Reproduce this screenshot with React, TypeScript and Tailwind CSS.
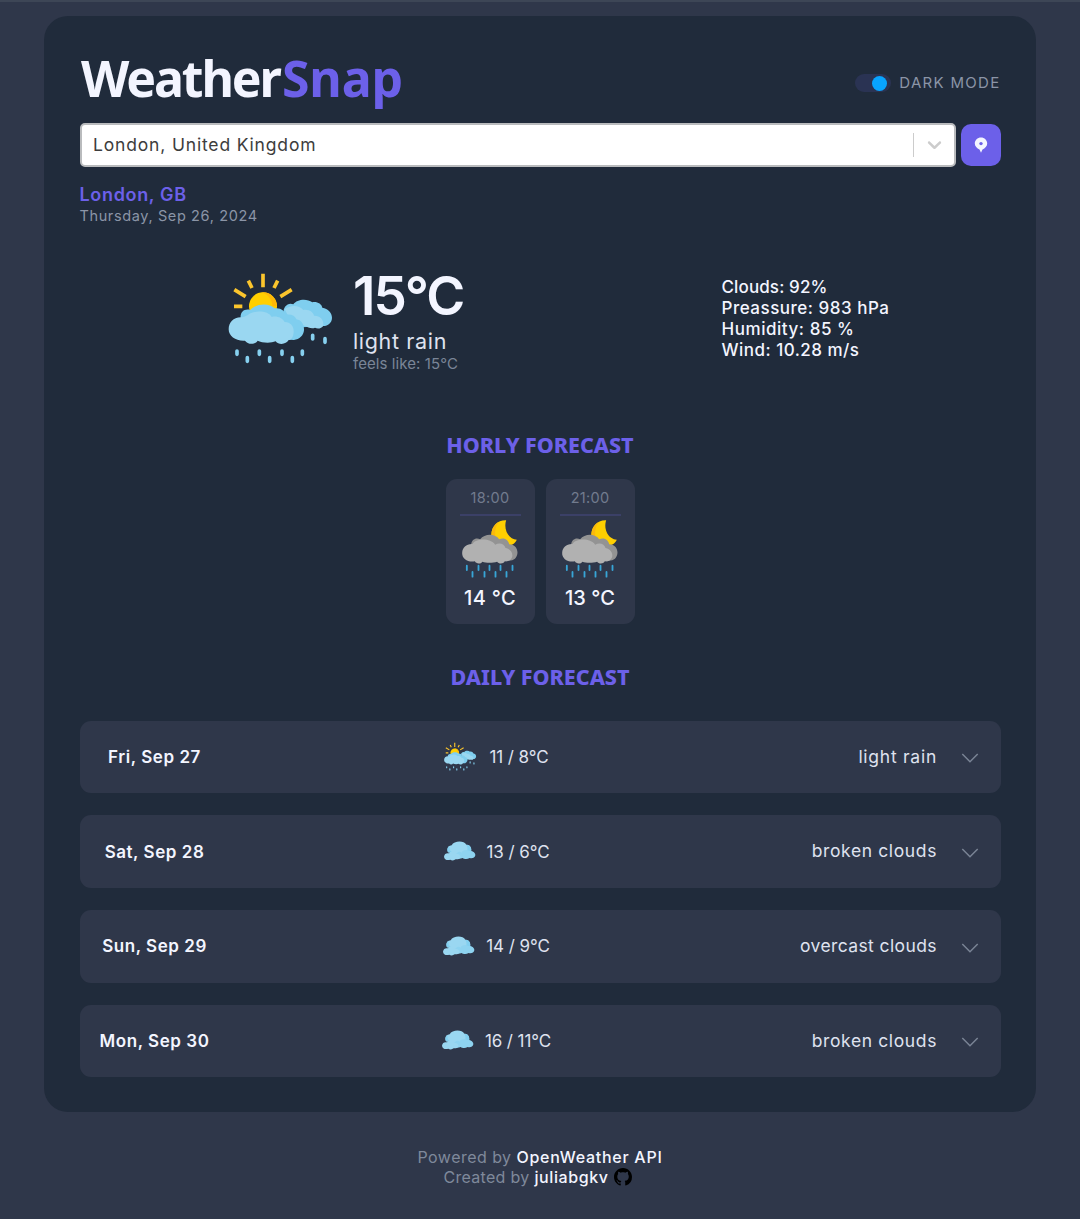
import { BsGithub } from 'react-icons/bs';

function SunRainIcon({ className }: { className: string }) {
  return (
    <svg viewBox="0 0 348 300" className={className} aria-hidden="true">
      <g stroke="#fbc52d" strokeWidth="11" strokeLinecap="butt">
        <path d="M123 17V58M79 38l11 22M167 38l-11 22M37 65l34 21M209 65l-34 21M36 115h25" />
      </g>
      <circle cx="123" cy="115" r="42" fill="#ffcf00" />
      <path d="M123 73a42 42 0 0 1 42 42h-14a42 42 0 0 0-35-42z" fill="#ffb908" />
      <path d="M185 135C182 117 199 101 214 109C224 94 254 90 271 103C285 100 299 108 301 119C318 122 330 134 330 149C330 164 318 174 304 174L240 178L200 160Z" fill="#7fceef" />
      <path d="M188 124C202 111 231 109 244 126C261 123 274 133 276 143C292 142 306 153 304 173C299 181 287 184 279 179C270 183 257 179 250 174L210 165Z" fill="#9ad7f1" />
      <path d="M56 150C54 131 68 121 85 126C103 105 143 105 158 121C175 118 189 128 191 140C207 137 219 142 223 154C238 156 247 169 246 187C245 202 232 215 216 216L90 210Z" fill="#7fceef" />
      <path d="M20 184C20 163 35 147 58 148C71 145 77 142 82 137C105 126 141 130 149 147C165 143 181 150 188 162C207 163 216 176 215 192C214 207 209 215 199 217C194 229 170 232 161 220C147 226 119 225 107 218C99 231 77 230 69 218C42 220 20 205 20 184Z" fill="#9ad7f1" />
      <g stroke="#86d0ef" strokeWidth="11" strokeLinecap="round">
        <path d="M45 249v10M76 269v11M112 249v10M143 269v11M180 249v10M211 269v11M241 249v10M272 202v11M309 212v11" />
      </g>
    </svg>
  );
}

function MoonRainIcon() {
  return (
    <svg viewBox="95 283 173 180" className="h-[60px] w-[58px]" aria-hidden="true">
      <path d="M230 287C203 286 183 307 186 336L240 362C251 360 258 354 262 345C238 345 221 315 230 287Z" fill="#ffcf00" />
      <path d="M209 291C194 298 184 315 186 336L199 342C195 322 197 304 209 291Z" fill="#fbb90c" />
      <path d="M125 360C126 344 140 338 152 344C165 326 197 325 209 344C223 336 238 346 239 359C255 359 264 371 264 384C263 399 253 408 238 408L150 400Z" fill="#939393" />
      <path d="M98 384C99 368 111 357 129 358C138 342 181 338 197 360C211 352 225 358 228 370C243 373 251 385 248 397C244 408 235 411 226 410C221 419 207 418 203 411C190 415 169 415 159 411C153 419 140 418 136 410C115 414 97 402 98 384Z" fill="#b1b1b1" />
      <g stroke="#38a5d6" strokeWidth="5.5" strokeLinecap="round">
        <path d="M112 423v13M147 423v13M180 423v13M213 423v13M249 423v13M129 442v14M165 442v14M198 442v14M231 442v14" />
      </g>
    </svg>
  );
}

function CloudsIcon() {
  return (
    <svg viewBox="38 108 96 58" className="mb-px h-[20px] w-[32px]" aria-hidden="true">
      <path d="M50 141C45 130 50 121 61 120C68 106 98 105 105 118C117 118 122 128 119 140L90 155Z" fill="#9ad7f1" />
      <path d="M105 118C117 118 122 128 119 140L104 142C111 134 109 124 105 118ZM50 141C46 133 49 125 55 122C53 131 56 137 61 140Z" fill="#82cfef" />
      <path d="M72 152C76 139 86 137 91 142C93 135 105 131 114 137C124 136 133 142 132 150C131 158 122 160 115 158C107 163 98 161 94 158C84 163 73 160 72 152Z" fill="#8ed3f0" />
      <path d="M38 154C39 145 46 142 53 144C61 138 72 141 75 146C83 145 89 151 87 157C83 162 77 162 73 162C67 167 60 165 57 163C47 166 39 163 38 154Z" fill="#9ad7f1" />
    </svg>
  );
}

function Chevron() {
  return (
    <svg viewBox="0 0 18 10" className="ml-[23.5px] mt-[3px] h-[10px] w-[18px]" fill="none" stroke="#7a8495" strokeWidth="1.5" aria-hidden="true">
      <path d="M1.3 1L9 8.7L16.7 1" />
    </svg>
  );
}

const stats = [
  { text: 'Clouds: 92%', cls: 'tracking-[0.12px]' },
  { text: 'Preassure: 983 hPa', cls: 'tracking-[0.51px]' },
  { text: 'Humidity: 85 %', cls: 'tracking-[0.55px]' },
  { text: 'Wind: 10.28 m/s', cls: 'tracking-[0.48px]' },
];

const hours = [
  { time: '18:00', temp: '14 °C', cls: 'tracking-[0.34px]' },
  { time: '21:00', temp: '13 °C', cls: 'tracking-[0.06px]' },
];

const days = [
  { date: 'Fri, Sep 27', temp: '11 / 8°C', text: 'light rain', sun: true, cls: 'tracking-[0.74px]' },
  { date: 'Sat, Sep 28', temp: '13 / 6°C', text: 'broken clouds', sun: false, cls: 'tracking-[0.62px]' },
  { date: 'Sun, Sep 29', temp: '14 / 9°C', text: 'overcast clouds', sun: false, cls: 'tracking-[0.4px]' },
  { date: 'Mon, Sep 30', temp: '16 / 11°C', text: 'broken clouds', sun: false, cls: 'tracking-[0.62px]' },
];

export default function App() {
  return (
    <div className="h-[1219px] border-t-2 border-[#3d4656] bg-[#2f374a] pt-[14px] font-['Inter',sans-serif] text-[#f3f5ff]">
      <main className="mx-auto h-[1096px] w-[992px] rounded-[24px] bg-[#202b3b] pl-[35.5px] pr-[35.5px] pt-6">
        <header className="flex h-[76px] items-center justify-between">
          <h1 className="flex pl-[1.5px] font-['Noto_Sans',sans-serif] text-[50px] font-bold leading-[77px]">
            <span className="w-[200px] whitespace-nowrap tracking-[-2.1px]">Weather</span>
            <span className="pl-px tracking-[-0.2px] text-[#6c60e9]">Snap</span>
          </h1>
          <div className="flex items-center pt-[10.5px]">
            <div className="mr-2 flex h-[18px] w-9 items-center justify-end rounded-full bg-[#2a3353] pr-[4px]">
              <div className="size-[15px] rounded-full bg-[#08a4ff]" />
            </div>
            <span className="text-[15px] leading-5 tracking-[1.3px] text-[#8b95a7]">DARK MODE</span>
          </div>
        </header>

        <div className="mt-[6px] flex h-[45px] items-center justify-between">
          <div className="flex h-[44px] w-[876px] items-center rounded-[5px] border-2 border-[#b9bbbd] bg-white pl-[11.5px]">
            <span className="flex-1 pt-px text-[17.5px] tracking-[0.83px] text-[#3d3d3d]">London, United Kingdom</span>
            <span className="h-6 w-px bg-[#cccccc]" />
            <svg viewBox="0 0 20 20" className="ml-[9px] mr-2 size-[23px]" fill="#cccccc" aria-hidden="true">
              <path d="M4.516 7.548c0.436-0.446 1.043-0.481 1.576 0l3.908 3.747 3.908-3.747c0.533-0.481 1.141-0.446 1.574 0 0.436 0.445 0.408 1.197 0 1.615-0.406 0.418-4.695 4.502-4.695 4.502-0.217 0.223-0.502 0.335-0.787 0.335s-0.57-0.112-0.789-0.335c0 0-4.287-4.084-4.695-4.502s-0.436-1.17 0-1.615z" />
            </svg>
          </div>
          <button aria-label="Use my location" className="flex h-[42px] w-[39.5px] items-center justify-center rounded-[10px] bg-[#6c60e9]">
            <svg viewBox="0 0 14 16" className="h-4 w-[14px]" aria-hidden="true">
              <path d="M7 .5C3.5 .5 .8 3.2 .8 6.6C.8 9.3 3 11.5 5.500 12.5L7 15.7L8.500 12.5C11 11.5 13.2 9.3 13.2 6.6C13.2 3.2 10.5 .5 7 .5Z" fill="#f3f5ff" />
              <circle cx="7" cy="6.6" r="1.7" fill="#6c60e9" />
            </svg>
          </button>
        </div>

        <div className="mt-[17px]">
          <h2 className="text-[18px] font-semibold leading-[22px] tracking-[0.66px] text-[#6c60e9]">London, GB</h2>
          <p className="text-[14.5px] leading-5 tracking-[0.62px] text-[#8b95a7]">Thursday, Sep 26, 2024</p>
        </div>

        <section className="mt-[42px] flex pl-[142.5px]">
          <SunRainIcon className="h-[100px] w-[116px]" />
          <div className="ml-[15px] w-[368px]">
            <p className="text-[53px] font-semibold leading-[57px] tracking-[-1.9px]">15°C</p>
            <p className="mt-[4px] text-[21.5px] leading-6 tracking-[0.66px] text-[#dfe2ef]">light rain</p>
            <p className="mt-px text-[15px] leading-5 tracking-[0.08px] text-[#7a8597]">feels like: 15°C</p>
          </div>
          <ul className="pl-[0.5px] pt-[8.5px] text-[17px] font-medium leading-[21px]">
            {stats.map((s) => (
              <li key={s.text} className={s.cls}>{s.text}</li>
            ))}
          </ul>
        </section>

        <h3 className="mt-[55.5px] text-center font-['Noto_Sans',sans-serif] text-[21.5px] font-extrabold leading-[30px] tracking-[-0.02px] text-[#6c60e9]">
          HORLY FORECAST
        </h3>
        <div className="mt-[19px] flex justify-center gap-[11px]">
          {hours.map((h) => (
            <div key={h.time} className="flex h-[145.5px] w-[89px] flex-col items-center rounded-[11px] bg-[#2f374a] pt-[9.5px]">
              <span className="text-[14.5px] leading-5 tracking-[0.3px] text-[#727b8e]">{h.time}</span>
              <span className="mb-[3px] mt-[6px] h-[2px] w-[61px] bg-[#3b4067]" />
              <MoonRainIcon />
              <span className={`mt-[7px] text-[20px] font-medium leading-6 ${h.cls}`}>{h.temp}</span>
            </div>
          ))}
        </div>

        <h3 className="mt-[38px] text-center font-['Noto_Sans',sans-serif] text-[21.5px] font-extrabold leading-[30px] tracking-[-0.02px] text-[#6c60e9]">
          DAILY FORECAST
        </h3>
        <div className="mt-[28.5px] flex flex-col gap-[22px]">
          {days.map((d) => (
            <div key={d.date} className="flex h-[72.7px] items-center rounded-[11px] bg-[#2f374a] pr-[22px]">
              <span className="w-[150px] pt-[1.5px] text-center text-[17px] font-semibold tracking-[0.55px]">{d.date}</span>
              <div className="ml-[167px] flex w-[200px] items-center justify-center gap-[11px]">
                {d.sun ? <SunRainIcon className="-ml-[2px] h-[31px] w-[36px]" /> : <CloudsIcon />}
                <span className="pt-[1.5px] text-[17px] tracking-[-0.08px] text-[#dfe2ef]">{d.temp}</span>
              </div>
              <span className={`ml-auto text-[17.5px] text-[#dfe2ef] ${d.cls}`}>{d.text}</span>
              <Chevron />
            </div>
          ))}
        </div>
      </main>

      <footer className="mt-[35px] text-center text-[16px] leading-5 text-[#7f899b]">
        <p className="tracking-[0.46px]">
          Powered by <span className="font-medium tracking-[0.72px] text-[#f3f5ff]">OpenWeather API</span>
        </p>
        <p className="flex items-center justify-center pr-[5px] tracking-[0.29px]">
          <span className="mr-[5px]">Created by</span>
          <span className="font-medium tracking-[0.58px] text-[#f3f5ff]">juliabgkv</span>
          <BsGithub className="ml-[5px] size-[18px] text-black" />
        </p>
      </footer>
    </div>
  );
}
